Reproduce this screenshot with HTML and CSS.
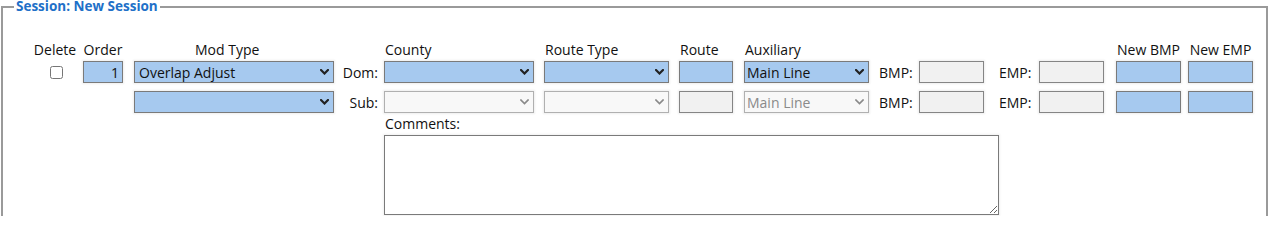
FILE: index.html
```html
<!DOCTYPE html>
<html>
<head>
<meta charset="utf-8">
<link rel="stylesheet" href="styles.css">
</head>
<body>
<fieldset class="session">
  <legend class="session-title">Session: New Session</legend>
  <div class="mod-grid">
    <!-- header row -->
    <div class="hdr hdr-delete">Delete</div>
    <div class="hdr hdr-order">Order</div>
    <div class="hdr hdr-mod">Mod Type</div>
    <div></div>
    <div class="hdr hdr-left">County</div>
    <div class="hdr hdr-left hdr-off">Route Type</div>
    <div class="hdr hdr-left hdr-off">Route</div>
    <div class="hdr hdr-left hdr-off">Auxiliary</div>
    <div></div><div></div><div></div><div></div>
    <div class="hdr hdr-new">New BMP</div>
    <div class="hdr hdr-new">New EMP</div>

    <!-- dominant row -->
    <div class="cell cell-check"><input type="checkbox" class="chk"></div>
    <div class="cell"><input type="text" class="fld fld-order blue" value="1"></div>
    <div class="cell"><span class="sel sel-mod"><select class="blue"><option>Overlap Adjust</option></select><svg class="chev" viewBox="0 0 9 6" width="9" height="6"><polyline points="1,1 4.5,4.5 8,1"/></svg></span></div>
    <div class="cell side">Dom:</div>
    <div class="cell"><span class="sel sel-county"><select class="blue"><option></option></select><svg class="chev" viewBox="0 0 9 6" width="9" height="6"><polyline points="1,1 4.5,4.5 8,1"/></svg></span></div>
    <div class="cell"><span class="sel sel-rt"><select class="blue"><option></option></select><svg class="chev" viewBox="0 0 9 6" width="9" height="6"><polyline points="1,1 4.5,4.5 8,1"/></svg></span></div>
    <div class="cell"><input type="text" class="fld fld-route blue"></div>
    <div class="cell"><span class="sel sel-aux"><select class="blue aux-text"><option>Main Line</option></select><svg class="chev" viewBox="0 0 9 6" width="9" height="6"><polyline points="1,1 4.5,4.5 8,1"/></svg></span></div>
    <div class="cell lbl">BMP:</div>
    <div class="cell"><input type="text" class="fld fld-mp gray" disabled></div>
    <div class="cell lbl">EMP:</div>
    <div class="cell"><input type="text" class="fld fld-mp gray" disabled></div>
    <div class="cell"><input type="text" class="fld fld-new blue"></div>
    <div class="cell"><input type="text" class="fld fld-new blue"></div>

    <!-- subordinate row -->
    <div class="cell"></div>
    <div class="cell"></div>
    <div class="cell"><span class="sel sel-mod"><select class="blue"><option></option></select><svg class="chev" viewBox="0 0 9 6" width="9" height="6"><polyline points="1,1 4.5,4.5 8,1"/></svg></span></div>
    <div class="cell side">Sub:</div>
    <div class="cell"><span class="sel sel-county off"><select disabled><option></option></select><svg class="chev" viewBox="0 0 9 6" width="9" height="6"><polyline points="1,1 4.5,4.5 8,1"/></svg></span></div>
    <div class="cell"><span class="sel sel-rt off"><select disabled><option></option></select><svg class="chev" viewBox="0 0 9 6" width="9" height="6"><polyline points="1,1 4.5,4.5 8,1"/></svg></span></div>
    <div class="cell"><input type="text" class="fld fld-route gray" disabled></div>
    <div class="cell"><span class="sel sel-aux off"><select disabled class="aux-text"><option>Main Line</option></select><svg class="chev" viewBox="0 0 9 6" width="9" height="6"><polyline points="1,1 4.5,4.5 8,1"/></svg></span></div>
    <div class="cell lbl">BMP:</div>
    <div class="cell"><input type="text" class="fld fld-mp gray" disabled></div>
    <div class="cell lbl">EMP:</div>
    <div class="cell"><input type="text" class="fld fld-mp gray" disabled></div>
    <div class="cell"><input type="text" class="fld fld-new blue"></div>
    <div class="cell"><input type="text" class="fld fld-new blue"></div>

    <!-- comments -->
    <div class="comments-label">Comments:</div>
    <div class="comments-box"><textarea class="comments"></textarea></div>
  </div>
</fieldset>
</body>
</html>
```

FILE: styles.css
```css
html, body {
  margin: 0;
  padding: 0;
  background: #ffffff;
}

body {
  height: 216px;
  overflow: hidden;
  font-family: "Open Sans", "Noto Sans", sans-serif;
  font-size: 14px;
  color: #111;
}

.session {
  margin: 0 0 0 1px;
  padding: 0 11px 12px 11px;
  border: 2px solid #9a9a9a;
  min-width: 0;
}

.session-title {
  padding: 0 2px;
  font-size: 13.5px;
  line-height: 13px;
  font-weight: 700;
  color: #2170c8;
}

.mod-grid {
  display: grid;
  margin: 28px 0 0 16px;
  grid-template-columns: 52px 48px 208px 46px 156px 135px 65px 135px 42px 78px 42px 75px 72px 72px;
  grid-template-rows: 17px 27px 22px 16px 80px;
  row-gap: 3px;
}

.hdr {
  line-height: 17px;
  white-space: nowrap;
}

.hdr-delete {
  text-align: center;
  padding-right: 2px;
}

.hdr-order {
  width: 40px;
  margin-left: 1px;
  text-align: center;
}

.hdr-mod {
  padding-left: 65px;
}

.hdr-left {
  padding-left: 1px;
}

.hdr-off {
  padding-left: 5px;
}

.hdr-new {
  width: 65px;
  margin-left: 4px;
  text-align: center;
}

.cell {
  display: flex;
  align-items: center;
  height: 22px;
  white-space: nowrap;
}

.cell-check {
  justify-content: center;
}

.chk {
  width: 13px;
  height: 13px;
  margin: 0 0 0 1px;
}

.side {
  justify-content: flex-end;
  padding-right: 6px;
}

.lbl {
  padding-left: 4px;
}

.fld {
  box-sizing: border-box;
  height: 22px;
  margin: 0;
  padding: 0 3px;
  border: 1px solid #7a7a7a;
  font-family: inherit;
  font-size: 14px;
  color: #111;
  box-shadow: 0 0 2px 1px rgba(0, 0, 0, 0.07);
  outline: none;
}

.blue {
  background: #a6c9ef;
}

.gray {
  background: #f1f1f1;
  border-color: #858585;
}

.fld-order {
  width: 40px;
  margin-left: 1px;
  text-align: right;
}

.fld-route {
  width: 54px;
  margin-left: 4px;
}

.fld-mp {
  width: 65px;
  margin-left: 2px;
}

.fld-new {
  width: 65px;
  margin-left: 4px;
}

.sel {
  position: relative;
  display: block;
  height: 22px;
}

.sel select {
  -webkit-appearance: none;
  appearance: none;
  box-sizing: border-box;
  width: 100%;
  height: 22px;
  margin: 0;
  padding: 0 18px 0 4px;
  border: 1px solid #7a7a7a;
  border-radius: 0;
  font-family: inherit;
  font-size: 14px;
  color: #111;
  box-shadow: 0 0 2px 1px rgba(0, 0, 0, 0.07);
  outline: none;
}

.sel select.aux-text {
  padding-left: 2px;
}

.sel.off select {
  background: #f8f8f8;
  border-color: #b0b0b0;
  color: #8a8a8a;
  opacity: 1;
}

.chev {
  position: absolute;
  right: 5px;
  top: 8px;
  fill: none;
  stroke: #222;
  stroke-width: 2.2;
  stroke-linecap: square;
}

.sel.off .chev {
  stroke: #8a8a8a;
  stroke-width: 1.6;
}

.sel-mod {
  width: 200px;
  margin-left: 4px;
}

.sel-county {
  width: 150px;
}

.sel-rt {
  width: 125px;
  margin-left: 4px;
}

.sel-aux {
  width: 125px;
  margin-left: 4px;
}

.comments-label {
  grid-column: 5 / -1;
  line-height: 16px;
  padding-left: 1px;
}

.comments-box {
  grid-column: 5 / -1;
  display: flex;
}

.comments {
  box-sizing: border-box;
  width: 615px;
  height: 80px;
  margin: 0;
  border: 1px solid #7a7a7a;
  font-family: inherit;
  font-size: 14px;
  box-shadow: 0 0 2px 1px rgba(0, 0, 0, 0.06);
  outline: none;
}
```
